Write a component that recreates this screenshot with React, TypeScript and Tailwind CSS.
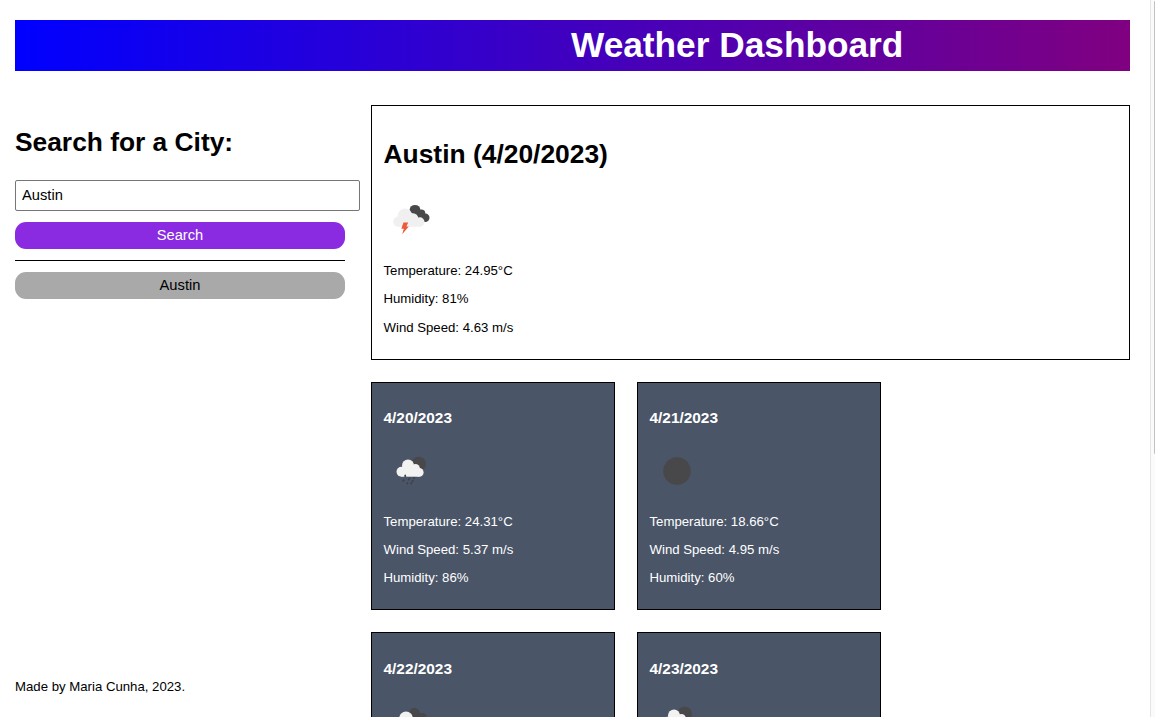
type IconKind = "storm" | "rain" | "clear" | "clouds";

function WeatherIcon({ kind }: { kind: IconKind }) {
  return (
    <svg className="block h-[50px] w-[56px]" viewBox="0 0 56 50">
      {kind === "storm" && (
        <>
          <g fill="#48484a">
            <ellipse cx="31" cy="14.6" rx="5.3" ry="4.6" />
            <circle cx="37.3" cy="18.5" r="4" />
            <circle cx="41.3" cy="22.8" r="4.2" />
            <path d="M27 17l11 9.3 5-4-12-8z" />
          </g>
          <g fill="#f0f0f0">
            <circle cx="14.3" cy="26.6" r="5.1" />
            <circle cx="21" cy="20.8" r="7.3" />
            <circle cx="29" cy="23.5" r="5.3" />
            <circle cx="35.8" cy="27" r="4.7" />
            <rect x="14.3" y="24" width="21.5" height="7.7" />
          </g>
          <path d="M19.5 27.4h4.7l-1.8 4h2.4l-6.6 7.9 1.6-5.6h-2.5z" fill="#ee5a38" />
        </>
      )}
      {kind === "rain" && (
        <>
          <circle cx="35.6" cy="18" r="7.3" fill="#48484a" />
          <g fill="#f2f2f2">
            <circle cx="18.5" cy="25.7" r="5" />
            <circle cx="25" cy="19.6" r="6" />
            <circle cx="32.5" cy="22.3" r="4.3" />
            <circle cx="36.3" cy="26.4" r="4.3" />
            <rect x="18.5" y="21" width="17.8" height="9.7" />
          </g>
          <g stroke="#3d4047" strokeWidth="1.6">
            <path d="M22 28.8l.5 2.2M21 33.5l-1 2.2M26.5 32l-.8 2.3M31.5 31.2l-.8 1.8M30 34.2l-.8 1.7M24.7 36.5l-.7 1.8M28.6 36.5l-.7 1.8" />
          </g>
        </>
      )}
      {kind === "clear" && <circle cx="28" cy="25" r="13.8" fill="#48484a" />}
      {kind === "clouds" && (
        <>
          <g fill="#48484a">
            <circle cx="31.5" cy="17.2" r="5.4" />
            <circle cx="39.4" cy="21.2" r="4.2" />
            <path d="M31 20h8v5h-8z" />
          </g>
          <g fill="#f2f2f2">
            <circle cx="15.5" cy="27" r="5" />
            <circle cx="23" cy="22.4" r="6.8" />
            <circle cx="34" cy="27.5" r="5" />
            <rect x="15.5" y="24.5" width="18.5" height="8" />
          </g>
        </>
      )}
    </svg>
  );
}

interface Forecast {
  date: string;
  icon: IconKind;
  readings?: string[];
}

const forecasts: Forecast[] = [
  { date: "4/20/2023", icon: "rain", readings: ["Temperature: 24.31°C", "Wind Speed: 5.37 m/s", "Humidity: 86%"] },
  { date: "4/21/2023", icon: "clear", readings: ["Temperature: 18.66°C", "Wind Speed: 4.95 m/s", "Humidity: 60%"] },
  { date: "4/22/2023", icon: "clouds" },
  { date: "4/23/2023", icon: "rain" },
];

function ForecastCard({ date, icon, readings }: Forecast) {
  return (
    <article className="h-[228px] w-[244px] border border-black bg-[#4a5568] px-[11.5px] pt-[26.3px] text-white">
      <h3 className="text-[15.4px] leading-[18px] font-bold">{date}</h3>
      <div className="mt-[18.7px] mb-[18px] -ml-px">
        <WeatherIcon kind={icon} />
      </div>
      {readings && (
        <div className="flex flex-col gap-[13px] text-[13.2px] leading-[15px]">
          {readings.map((reading) => (
            <p key={reading}>{reading}</p>
          ))}
        </div>
      )}
    </article>
  );
}

export default function App() {
  return (
    <div className="flex h-[717px] overflow-hidden bg-white font-['Liberation_Sans',Arial,sans-serif] text-black">
      <div className="flex w-[1150px] shrink-0 flex-col pt-[20px] pr-[20px] pl-[15px]">
        <header className="h-[51px] shrink-0 bg-[linear-gradient(to_right,blue,purple)] pl-[556px]">
          <h1 className="text-[35.25px] leading-[50px] font-bold whitespace-nowrap text-white">Weather Dashboard</h1>
        </header>
        <div className="mt-[34px] flex h-[612px] gap-[26px]">
          <aside className="flex w-[330px] shrink-0 flex-col">
            <h2 className="mt-[22px] text-[26.35px] leading-[30px] font-bold">Search for a City:</h2>
            <input
              aria-label="City"
              defaultValue="Austin"
              className="mt-[23px] h-[31px] w-[345px] shrink-0 rounded-[2px] border border-[#767676] bg-white px-[6px] pb-px text-[14.7px] outline-none"
            />
            <button className="mt-[11px] h-[27px] shrink-0 rounded-[11px] bg-[blueviolet] pb-px text-[14.7px] leading-[26px] text-white">Search</button>
            <hr className="mt-[11px] border-black" />
            <button className="mt-[11px] h-[27px] shrink-0 rounded-[11px] bg-[darkgray] pb-px text-[14.7px] leading-[26px]">Austin</button>
            <footer className="mt-auto mb-[23px] text-[13.2px] leading-[15px]">Made by Maria Cunha, 2023.</footer>
          </aside>
          <main className="w-[759px] shrink-0">
            <section className="h-[255px] border border-black px-[11.5px] pt-[33px]">
              <h2 className="text-[26.4px] leading-[30px] font-bold">Austin (4/20/2023)</h2>
              <div className="mt-[26px] mb-[18px]">
                <WeatherIcon kind="storm" />
              </div>
              <div className="flex flex-col gap-[13.3px] text-[13.2px] leading-[15px]">
                <p>Temperature: 24.95°C</p>
                <p>Humidity: 81%</p>
                <p>Wind Speed: 4.63 m/s</p>
              </div>
            </section>
            <div className="mt-[22px] flex flex-wrap gap-x-[22px] gap-y-[22.4px] pr-[200px]">
              {forecasts.map((forecast) => (
                <ForecastCard key={forecast.date} {...forecast} />
              ))}
            </div>
          </main>
        </div>
      </div>
      <div className="flex w-[5px] shrink-0 justify-end border-l border-[#e5e5e5] bg-[#fafafa]">
        <div className="mt-[1px] h-[453px] w-px rounded-l-full bg-[#c1c1c1]" />
      </div>
    </div>
  );
}
